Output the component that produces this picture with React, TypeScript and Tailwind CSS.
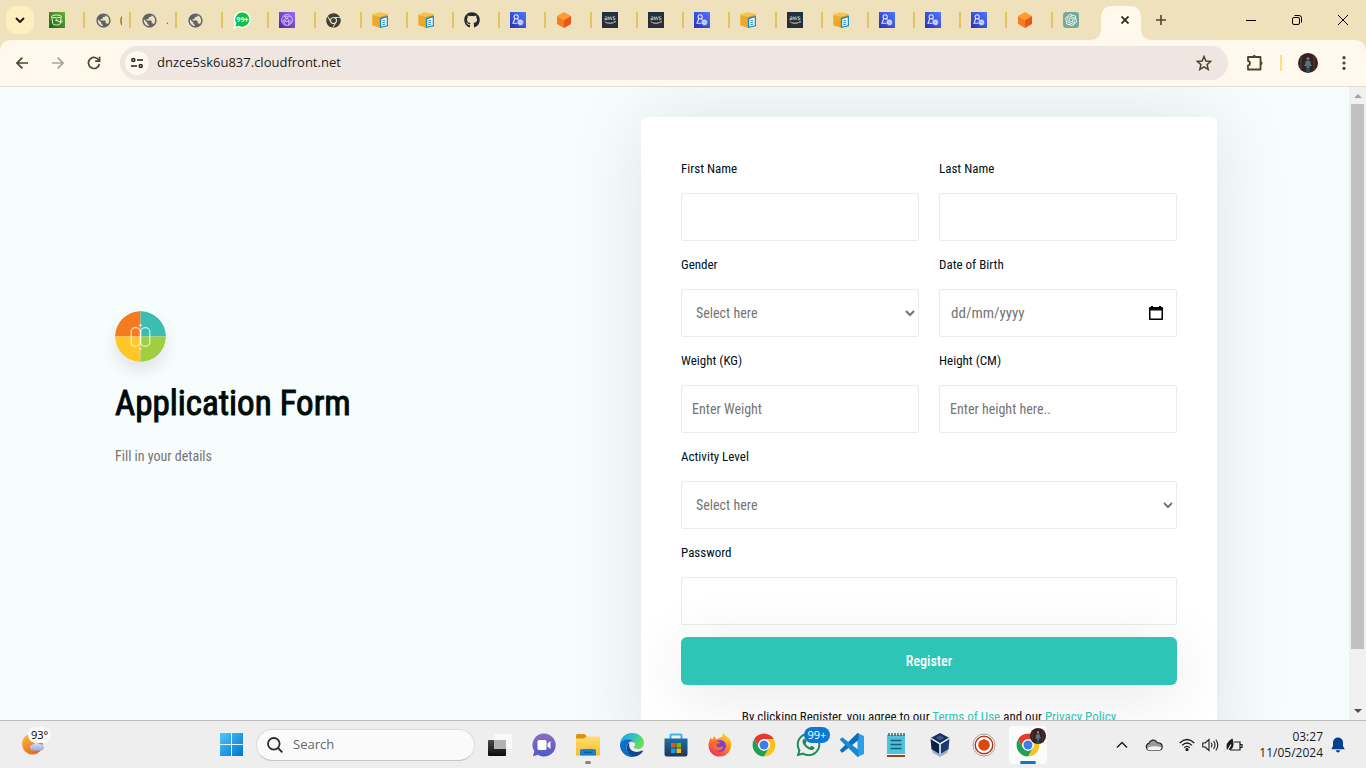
import React from "react";
import { FaAws, FaChrome, FaGithub, FaWhatsapp } from "react-icons/fa";
import { MdPublic } from "react-icons/md";
import { RiOpenaiFill } from "react-icons/ri";

type SvgProps = { className?: string };

/* ---------- favicons ---------- */

const BucketIcon = () => (
  <svg viewBox="0 0 16 16" className="size-4" fill="none" stroke="#e6f4d8" strokeWidth="1">
    <defs>
      <linearGradient id="s3g" x1="0" y1="1" x2="1" y2="0">
        <stop offset="0" stopColor="#1b660f" />
        <stop offset="1" stopColor="#6cae3e" />
      </linearGradient>
    </defs>
    <rect width="16" height="16" fill="url(#s3g)" stroke="none" />
    <ellipse cx="7.5" cy="4.4" rx="4.8" ry="1.4" />
    <path d="M2.7 4.6l1.2 7.2c.3 1.6 6.900 1.600 7.200 0l1.200-7.200M7.300 8.200l4 1.800c2.500 1 2.300-.6.500-1.900" />
    <circle cx="7.300" cy="8.200" r=".6" fill="#e6f4d8" />
  </svg>
);

const CdnIcon = () => (
  <svg viewBox="0 0 16 16" className="size-4" fill="none" stroke="#e9dcff" strokeWidth=".8">
    <defs>
      <linearGradient id="cfg" x1="0" y1="1" x2="1" y2="0">
        <stop offset="0" stopColor="#4d27a8" />
        <stop offset="1" stopColor="#a166ff" />
      </linearGradient>
    </defs>
    <rect width="16" height="16" fill="url(#cfg)" stroke="none" />
    <circle cx="8" cy="8" r="5.400" />
    <circle cx="7.500" cy="5.500" r="1.200" />
    <circle cx="5.200" cy="9" r="1.200" />
    <circle cx="10.500" cy="9.800" r="1.200" />
    <path d="M6.800 6.500L5.700 8M8.300 6.400l1.700 2.500M6.400 9.200l2.900.5M4.500 4l2 1M11.500 4.500L8.700 5.200M5.400 10.200l1 2.700M10.300 11l-1 2" />
  </svg>
);

const BoxIcon = () => (
  <svg viewBox="0 0 16 16" className="size-4">
    <path d="M0 2.600L7 .2l8.500 1.600v2L8 5.600 0 3.600z" fill="#f8c24e" />
    <path d="M.3 3.300L8 5v10.800L.3 13.200z" fill="#f0a828" />
    <path d="M8 5l7.500-2v10L8 15.800z" fill="#e08c1a" />
    <path d="M7.800 6.200l8.200-2.400v10.400l-8.200 1.800z" fill="#1f8bc4" />
    <path d="M9.300 7.200l5.400-1.600v7.600l-5.400 1.300z" fill="#fff" />
    <path d="M10.300 9l3-.8M10.300 10.900l3-.8M10.300 12.800l3-.8" stroke="#1f8bc4" strokeWidth="1" />
  </svg>
);

const IdentityIcon = () => (
  <svg viewBox="0 0 16 16" className="size-4" fill="none" stroke="#dfe6ff" strokeWidth="1.100">
    <defs>
      <linearGradient id="idg" x1="0" y1="1" x2="1" y2="0">
        <stop offset="0" stopColor="#2a2fb8" />
        <stop offset="1" stopColor="#4f78ff" />
      </linearGradient>
    </defs>
    <rect width="16" height="16" fill="url(#idg)" stroke="none" />
    <circle cx="6.200" cy="4.800" r="2.100" />
    <path d="M4.800 6.500L3 11.200h4.500M7.500 6.500l.8 1.700" />
    <circle cx="10.400" cy="10.400" r="1.900" fill="#aebcf8" />
    <circle cx="10.400" cy="10.400" r="2.600" strokeDasharray="1 1" />
  </svg>
);

const HexIcon = () => (
  <svg viewBox="0 0 16 16" className="size-4">
    <path d="M8 0l7 4-7 4-7-4z" fill="#ff9a2e" />
    <path d="M1 4l7 4v8l-7-4z" fill="#f57c20" />
    <path d="M15 4L8 8v8l7-4z" fill="#e8571c" />
  </svg>
);

const AwsIcon = () => (
  <span className="flex size-4 items-center justify-center bg-[#222f3e]">
    <svg viewBox="0 0 16 16" className="size-4">
      <FaAws x="2" y="2" size={12} color="#e8eaed" />
      <path d="M3 10q5 3.200 10 0" fill="none" stroke="#d9861c" strokeWidth="1" />
    </svg>
  </span>
);

const ChatBadgeIcon = () => (
  <svg viewBox="0 0 18 18" className="size-[18px] shrink-0">
    <path d="M9.500 .8a7.800 7.800 0 1 1-3.800 14.700L1 17l1.500-4.500A7.800 7.800 0 0 1 9.500.8z" fill="#0fc24a" stroke="#fff" strokeWidth="1.500" />
    <text x="9.300" y="11.300" textAnchor="middle" fill="#fff" fontSize="7" fontWeight="700" fontFamily="Roboto, sans-serif">99+</text>
  </svg>
);

const GlobeIcon = () => <MdPublic className="size-[17px] shrink-0 text-[#5f6368]" />;
const GithubIcon = () => <FaGithub className="size-4 text-[#24292f]" />;
const ChromeMonoIcon = () => <FaChrome className="size-[15px] text-[#3f4034]" />;
const OpenAiIcon = () => (
  <span className="flex size-4 items-center justify-center rounded-[3px] bg-[#74aa9c]">
    <RiOpenaiFill className="size-[14px] text-white" />
  </span>
);

const tabs: { name: string; Icon: () => React.JSX.Element; text?: string }[] = [
  { name: "S3", Icon: BucketIcon },
  { name: "Site", Icon: GlobeIcon, text: "(" },
  { name: "Site", Icon: GlobeIcon, text: "." },
  { name: "Site", Icon: GlobeIcon },
  { name: "WhatsApp", Icon: ChatBadgeIcon },
  { name: "CloudFront", Icon: CdnIcon },
  { name: "Chrome", Icon: ChromeMonoIcon },
  { name: "Docs", Icon: BoxIcon },
  { name: "Docs", Icon: BoxIcon },
  { name: "GitHub", Icon: GithubIcon },
  { name: "IAM", Icon: IdentityIcon },
  { name: "Console", Icon: HexIcon },
  { name: "AWS", Icon: AwsIcon },
  { name: "AWS", Icon: AwsIcon },
  { name: "IAM", Icon: IdentityIcon },
  { name: "Docs", Icon: BoxIcon },
  { name: "AWS", Icon: AwsIcon },
  { name: "Docs", Icon: BoxIcon },
  { name: "IAM", Icon: IdentityIcon },
  { name: "IAM", Icon: IdentityIcon },
  { name: "IAM", Icon: IdentityIcon },
  { name: "Console", Icon: HexIcon },
  { name: "ChatGPT", Icon: OpenAiIcon },
];

/* ---------- browser chrome ---------- */

function TabStrip() {
  return (
    <div className="flex h-10 items-center bg-[#eee1bc] pl-[6px]">
      <button aria-label="Search tabs" className="mr-[5px] flex size-7 shrink-0 items-center justify-center rounded-[10px] bg-[#ffefc0]">
        <svg viewBox="0 0 10 6" className="h-[6px] w-[10px]" fill="none" stroke="#1f1c10" strokeWidth="2">
          <path d="M1 1l4 4 4-4" />
        </svg>
      </button>
      <div className="flex h-full max-w-[1060px] min-w-0 flex-1 items-center">
        {tabs.map(({ name, Icon, text }, i) => (
          <button key={i} aria-label={name} className="flex h-4 min-w-0 flex-1 items-center overflow-visible pl-[10px]">
            <Icon />
            {text && <span className="ml-2 w-[2px] overflow-hidden text-[10px] text-[#4a4020]">{text}</span>}
            {i < tabs.length - 1 && <span className="ml-auto h-4 w-[2px] shrink-0 bg-[#e0c562]" />}
          </button>
        ))}
      </div>
      <div className="relative ml-[2px] flex h-[34px] w-10 shrink-0 items-center self-end rounded-t-[10px] bg-[#fff8ec]">
        <svg viewBox="0 0 10 10" className="absolute bottom-0 -left-[10px] size-[10px]" fill="#fff8ec">
          <path d="M10 0v10H0A10 10 0 0 0 10 0z" />
        </svg>
        <svg viewBox="0 0 10 10" className="absolute -right-[10px] bottom-0 size-[10px]" fill="#fff8ec">
          <path d="M0 0v10h10A10 10 0 0 1 0 0z" />
        </svg>
        <button aria-label="Close tab" className="mb-[6px] ml-4 flex size-4 items-center justify-center">
          <svg viewBox="0 0 8 8" className="size-2" stroke="#2e2b1a" strokeWidth="1.800">
            <path d="M.5.5l7 7M7.500.5l-7 7" />
          </svg>
        </button>
      </div>
      <button aria-label="New tab" className="ml-[6px] flex size-7 shrink-0 items-center justify-center">
        <svg viewBox="0 0 10 10" className="size-[10px]" stroke="#4c472f" strokeWidth="1.600">
          <path d="M5 0v10M0 5h10" />
        </svg>
      </button>
      <div className="ml-auto flex h-full shrink-0">
        <button aria-label="Minimize" className="flex w-[46px] items-center justify-center">
          <svg viewBox="0 0 10 10" className="size-[10px]" stroke="#000"><path d="M0 5.500h10" /></svg>
        </button>
        <button aria-label="Restore" className="flex w-[46px] items-center justify-center">
          <svg viewBox="0 0 10 10" className="size-[10px]" fill="none" stroke="#000">
            <rect x=".5" y="2.500" width="7" height="7" rx="1.500" />
            <path d="M2.500.5h4.500a2.500 2.500 0 0 1 2.500 2.500v4.500" />
          </svg>
        </button>
        <button aria-label="Close" className="flex w-[46px] items-center justify-center">
          <svg viewBox="0 0 10 10" className="size-[10px]" stroke="#000"><path d="M0 0l10 10M10 0L0 10" /></svg>
        </button>
      </div>
    </div>
  );
}

const Avatar = ({ className }: SvgProps) => (
  <svg viewBox="0 0 20 20" className={className}>
    <clipPath id="avc"><circle cx="10" cy="10" r="10" /></clipPath>
    <g clipPath="url(#avc)">
      <rect width="20" height="20" fill="#33221f" />
      <path d="M3 0v20M16 0v20" stroke="#46302a" strokeWidth="2" />
      <circle cx="10" cy="5.500" r="1.600" fill="#a06c55" />
      <path d="M7.500 8.500q2.500-2 5 0l.5 4h-1.400V15H8.400v-2.500H7z" fill="#527384" />
      <path d="M8.400 15h3.200v5H8.400z" fill="#26506b" />
      <path d="M6.500 12.500h1.300M12.200 12.500h1.300" stroke="#b98468" />
    </g>
  </svg>
);

function Toolbar() {
  return (
    <div className="bg-[#eee1bc]">
      <div className="flex h-[47px] items-center rounded-t-[10px] border-b border-[#e8dfca] bg-[#fff8ec] pr-2 pl-2">
        <button aria-label="Back" className="flex size-7 items-center justify-center">
          <svg viewBox="0 0 12 12" className="size-3" fill="none" stroke="#4a452c" strokeWidth="1.700"><path d="M12 6H1M6.300.7L1 6l5.300 5.300" /></svg>
        </button>
        <button aria-label="Forward" className="ml-2 flex size-7 items-center justify-center">
          <svg viewBox="0 0 12 12" className="size-3" fill="none" stroke="#aba694" strokeWidth="1.700"><path d="M0 6h11M5.700.7L11 6l-5.300 5.300" /></svg>
        </button>
        <button aria-label="Reload" className="ml-2 flex size-7 items-center justify-center">
          <svg viewBox="0 0 14 14" className="size-[14px]" fill="none" stroke="#4a452c" strokeWidth="1.700">
            <path d="M11.800 4.300A5.500 5.500 0 1 0 12.400 8" />
            <path d="M12.600.8v4.400H8.200" />
          </svg>
        </button>
        <div className="ml-3 flex h-[34px] min-w-0 flex-1 items-center rounded-full bg-[#efe6e1] pr-3 pl-[5px]">
          <button aria-label="Site information" className="flex size-6 shrink-0 items-center justify-center rounded-full bg-[#fff8ec]">
            <svg viewBox="0 0 12 12" className="size-3" fill="none" stroke="#2a2a2a" strokeWidth="1.600">
              <circle cx="2.300" cy="3" r="1.500" /><path d="M6 3h6" />
              <circle cx="9.700" cy="9" r="1.500" /><path d="M0 9h6" />
            </svg>
          </button>
          <input
            aria-label="Address"
            defaultValue="dnzce5sk6u837.cloudfront.net"
            className="ml-2 min-w-0 flex-1 bg-transparent font-['Open_Sans',sans-serif] text-[13px] text-[#1f1c14] outline-none"
          />
          <button aria-label="Bookmark this page" className="flex size-6 items-center justify-center">
            <svg viewBox="0 0 16 16" className="size-4" fill="none" stroke="#4a452c" strokeWidth="1.500">
              <path d="M8 1.500l1.900 4.500 4.900.4-3.700 3.200 1.100 4.800L8 11.900l-4.200 2.500 1.100-4.800L1.200 6.400 6.100 6z" />
            </svg>
          </button>
        </div>
        <button aria-label="Extensions" className="ml-3 flex size-7 items-center justify-center">
          <svg viewBox="0 0 18 18" className="size-[18px]" fill="none" stroke="#4a452c" strokeWidth="1.800" strokeLinejoin="round">
            <path d="M3 3h12.500v12.500H3v-4c2.600-.3 2.600-4.200 0-4.500z" />
            <path d="M7.500 2.500a2 2 0 0 1 3.500 0zM16 7.500a2 2 0 0 1 0 3.500z" fill="#4a452c" strokeWidth="1" />
          </svg>
        </button>
        <span className="ml-3 h-4 w-[2px] bg-[#ffe07a]" />
        <button aria-label="Profile" className="ml-4 flex size-5 items-center justify-center">
          <Avatar className="size-5" />
        </button>
        <button aria-label="Menu" className="ml-3 flex size-7 items-center justify-center">
          <svg viewBox="0 0 4 14" className="h-[14px] w-1" fill="#4a452c">
            <circle cx="2" cy="1.700" r="1.600" /><circle cx="2" cy="7" r="1.600" /><circle cx="2" cy="12.300" r="1.600" />
          </svg>
        </button>
      </div>
    </div>
  );
}

/* ---------- page ---------- */

const fieldClass =
  "h-12 w-full rounded-[2px] border border-[#ebebeb] bg-transparent px-[10px] text-sm text-[#757575] placeholder:text-[#757575] outline-none";

function Field({ id, label, children, wide }: { id: string; label: string; children: React.ReactNode; wide?: boolean }) {
  return (
    <div className={wide ? "col-span-2" : ""}>
      <label htmlFor={id} className="mb-3 block text-[13px] leading-6 text-[#00101c]">{label}</label>
      {children}
    </div>
  );
}

const Logo = () => (
  <svg viewBox="0 0 52 52" className="size-[51px] rounded-full shadow-[0_8px_16px_rgba(0,0,0,0.1)]" role="img" aria-label="Logo">
    <clipPath id="lgc"><circle cx="26" cy="26" r="26" /></clipPath>
    <g clipPath="url(#lgc)">
      <path d="M0 0h26v26H0z" fill="#f47b20" />
      <path d="M26 0h26v26H26z" fill="#3dbdb1" />
      <path d="M0 26h26v26H0z" fill="#ffc629" />
      <path d="M26 26h26v26H26z" fill="#9fce41" />
    </g>
    <g fill="none" stroke="#fff" strokeOpacity=".7" strokeWidth="1.400">
      <rect x="16.500" y="17" width="9.300" height="19" rx="4.500" />
      <rect x="26.200" y="17" width="9.300" height="19" rx="4.500" />
    </g>
    <circle cx="26" cy="14.500" r="1.200" fill="#fff" fillOpacity=".75" />
    <circle cx="26" cy="38.500" r="1.200" fill="#fff" fillOpacity=".6" />
  </svg>
);

function Page() {
  return (
    <main className="flex min-h-0 flex-1 overflow-hidden bg-[#f7fdfd] font-['Roboto_Condensed','Liberation_Sans_Narrow','Liberation_Sans',sans-serif]">
      <div className="grid min-w-0 flex-1 grid-cols-[526fr_576fr] items-start overflow-hidden pt-[30px] pr-[132px] pl-[115px]">
        <section className="pt-[194px]">
          <Logo />
          <h1 className="mt-4 text-[35px] leading-[52px] text-[#000b0a] [-webkit-text-stroke:1px]">Application Form</h1>
          <p className="mt-[14px] text-sm leading-6 text-[#757575]">Fill in your details</p>
        </section>
        <form
          className="grid grid-cols-2 gap-x-5 gap-y-3 rounded-md bg-white p-10 shadow-[0_0_80px_rgba(0,0,0,0.1)]"
          onSubmit={(e) => e.preventDefault()}
        >
          <Field id="first" label="First Name"><input id="first" className={fieldClass} /></Field>
          <Field id="last" label="Last Name"><input id="last" className={fieldClass} /></Field>
          <Field id="gender" label="Gender">
            <select id="gender" className={fieldClass}>
              <option>Select here</option><option>Male</option><option>Female</option>
            </select>
          </Field>
          <Field id="dob" label="Date of Birth">
            <div className="flex h-12 items-center rounded-[2px] border border-[#ebebeb] pr-[10px] pl-[11px]">
              <input id="dob" placeholder="dd/mm/yyyy" className="min-w-0 flex-1 bg-transparent text-[15px] text-[#757575] outline-none placeholder:text-[#757575]" />
              <button type="button" aria-label="Open calendar" className="flex size-5 items-center justify-center">
                <svg viewBox="0 0 14 14" className="size-[14px]" fill="#000">
                  <path d="M2 0h2v1h6V0h2v1h1q1 0 1 1v11q0 1-1 1H1q-1 0-1-1V2q0-1 1-1h1zM1.500 4.500v8h11v-8z" fillRule="evenodd" />
                </svg>
              </button>
            </div>
          </Field>
          <Field id="weight" label="Weight (KG)"><input id="weight" placeholder="Enter Weight" className={fieldClass} /></Field>
          <Field id="height" label="Height (CM)"><input id="height" placeholder="Enter height here.." className={fieldClass} /></Field>
          <Field id="activity" label="Activity Level" wide>
            <select id="activity" className={fieldClass}>
              <option>Select here</option><option>Low</option><option>High</option>
            </select>
          </Field>
          <Field id="password" label="Password" wide><input id="password" type="password" className={fieldClass} /></Field>
          <button type="submit" className="col-span-2 h-12 rounded-md bg-[#2ec4b6] pb-px text-sm font-medium text-white shadow-[0_10px_60px_rgba(0,0,0,0.1)]">
            Register
          </button>
          <p className="col-span-2 mt-2 text-center text-[13px] leading-6 text-[#111]">
            By clicking Register, you agree to our <a href="#terms" className="text-[#2ec4b6]">Terms of Use</a> and our{" "}
            <a href="#privacy" className="text-[#2ec4b6]">Privacy Policy</a>
          </p>
        </form>
      </div>
      <div aria-hidden="true" className="flex w-[17px] shrink-0 flex-col items-center bg-[#f1f1f1] py-[6px]">
        <svg viewBox="0 0 8 5" className="h-[5px] w-2" fill="#a3a3a3"><path d="M0 5l4-4 4 4z" /></svg>
        <div className="mt-[6px] flex min-h-0 w-[13px] flex-1 flex-col">
          <div className="h-[90%] bg-[#c1c1c1]" />
        </div>
        <svg viewBox="0 0 8 5" className="h-[5px] w-2" fill="#505050"><path d="M0 0l4 4 4-4z" /></svg>
      </div>
    </main>
  );
}

/* ---------- taskbar ---------- */

const ChromeLogo = ({ className = "size-6" }: SvgProps) => {
  const arm = "M24 13H43.050A22 22 0 0 0 4.950 13L14.470 29.500A11 11 0 0 1 24 13z";
  return (
    <svg viewBox="1 1 46 46" className={className}>
      <circle cx="24" cy="24" r="22" fill="#fff" />
      <path d={arm} fill="#e33b2e" />
      <path d={arm} fill="#fcc31e" transform="rotate(120 24 24)" />
      <path d={arm} fill="#1fa050" transform="rotate(240 24 24)" />
      <circle cx="24" cy="24" r="11" fill="#fff" />
      <circle cx="24" cy="24" r="8.600" fill="#3b7ded" />
    </svg>
  );
};

const TaskViewIcon = () => (
  <svg viewBox="0 0 24 24" className="size-6">
    <defs><linearGradient id="tvd" x1="0" y1="0" x2="0" y2="1"><stop stopColor="#4a4a4a" /><stop offset="1" stopColor="#0c0c0c" /></linearGradient></defs>
    <rect x="6" y="1" width="18" height="15" rx="1" fill="#fafafa" />
    <rect x="0" y="7" width="18" height="16" rx="1" fill="url(#tvd)" />
    <path d="M6 7h12v9H6z" fill="#b2b2b2" />
  </svg>
);

const MeetIcon = () => (
  <svg viewBox="0 0 24 24" className="size-6">
    <defs><linearGradient id="mtg" x1="0" y1="0" x2="0" y2="1"><stop stopColor="#8c6fc0" /><stop offset="1" stopColor="#5059c9" /></linearGradient></defs>
    <path d="M12 .5A11.500 11.500 0 1 1 6 21.700L1 23.200l1.300-5A11.500 11.500 0 0 1 12 .5z" fill="url(#mtg)" />
    <rect x="5.500" y="7" width="9" height="10" rx="1.500" fill="#fff" />
    <path d="M15.500 10.500l3-2.500v8l-3-2.500z" fill="#fff" />
  </svg>
);

const FolderIcon = () => (
  <svg viewBox="0 0 24 24" className="size-6">
    <defs><linearGradient id="fdg" x1="0" y1="0" x2="0" y2="1"><stop stopColor="#ffdf70" /><stop offset="1" stopColor="#fbbc2c" /></linearGradient></defs>
    <path d="M0 2.500Q0 1 1.500 1h7L11 3.500 9 6H0z" fill="#d9940f" />
    <path d="M0 5.500h8l2.500-2H23q1 0 1 1v17q0 1-1 1H1q-1 0-1-1z" fill="url(#fdg)" />
    <path d="M4 22.500V18q0-2 2-2h12q2 0 2 2v4.500z" fill="#1380d3" />
    <path d="M8 19.500h8" stroke="#0a5a9c" strokeWidth="1.500" />
  </svg>
);

const EdgeIcon = () => (
  <svg viewBox="0 0 24 24" className="size-6">
    <defs>
      <linearGradient id="edg" x1="0" y1="0" x2="1" y2=".4"><stop stopColor="#1f9fe0" /><stop offset=".5" stopColor="#2cbfcf" /><stop offset="1" stopColor="#69df55" /></linearGradient>
    </defs>
    <path d="M0 12C0 5 5 0 12 0c7.500 0 12 5 12 10 0 3.800-3 6-6 6-2.800 0-4.300-1.100-4-2 .3-1 1.200-1.400 1.200-3 0-2-2.200-4-5.200-4C5 7 0 10 0 12z" fill="url(#edg)" />
    <path d="M0 12c.5-3.500 4-5.500 8.200-5.500 3.500 0 6.300 1.500 6.900 4-1-1.500-2.500-2-3.800-2C8 9 6.300 12 6.500 15c.3 4.500 4 8 8.500 8.500A12 12 0 0 1 0 12z" fill="#0c6fc7" />
    <path d="M9 9.500c-2.500 2-3 5-2 8 1.300 4 5 6.500 8.500 6 3.300-.7 6-2.800 7.400-5.200.3-.6-.2-1-.8-.7-5 2.500-11 1.500-12.500-3-.6-2-.3-3.800-.6-5.100z" fill="#114a8b" />
  </svg>
);

const StoreIcon = () => (
  <svg viewBox="0 0 24 24" className="size-6">
    <defs><linearGradient id="stg" x1="0" y1="0" x2="0" y2="1"><stop stopColor="#1b6fa8" /><stop offset="1" stopColor="#22345a" /></linearGradient></defs>
    <path d="M6.500 6V2.500q0-1 1-1h9q1 0 1 1V6" fill="none" stroke="#34b5ee" strokeWidth="2" />
    <path d="M.5 5.500h23V21q0 2.500-2.500 2.500H3Q.5 23.500.5 21z" fill="url(#stg)" />
    <path d="M7 10h4.500v4.500H7z" fill="#f25022" /><path d="M12.500 10H17v4.500h-4.500z" fill="#7fba00" />
    <path d="M7 15.500h4.500V20H7z" fill="#00a4ef" /><path d="M12.500 15.500H17V20h-4.500z" fill="#ffb900" />
  </svg>
);

const FirefoxIcon = () => (
  <svg viewBox="0 0 24 24" className="size-6">
    <defs>
      <linearGradient id="ffg" x1=".85" y1="0" x2=".2" y2="1"><stop stopColor="#ffe23e" /><stop offset=".45" stopColor="#ff8a1e" /><stop offset="1" stopColor="#f0286b" /></linearGradient>
    </defs>
    <path d="M2.500 4.500l1.700 2.200L6.500 3l1.500 3.200L14 4c0-2 1-3.300 2-4 .5 3 5.200 4 6.500 7.500C25 15.500 20 23.500 12 23.500S-.5 17 .8 10z" fill="url(#ffg)" />
    <circle cx="12" cy="13" r="6" fill="#7b3fd1" />
    <path d="M4.500 8.500c3-1.500 4 0 7 .3 1.500.3 1 1.600-1.500 2-2 .5-2 2.500.5 3.200 2 .5 3.500-1 5-.2-1 3.200-4.500 4.700-7.500 3.500-3.500-1.500-4.800-5-3.500-8.800z" fill="#ff6a2a" />
  </svg>
);

const WhatsAppIcon = () => (
  <span className="relative">
    <FaWhatsapp className="size-[27px] text-[#1c8a55]" />
    <span className="absolute -top-[4px] left-[9px] rounded-full bg-[#0a78d4] px-1 font-['Open_Sans',sans-serif] text-[11px] leading-4 text-white">99+</span>
  </span>
);

const CodeIcon = () => (
  <svg viewBox="0 0 24 24" className="size-6">
    <path d="M17.500 0L24 3v18l-6.500 3z" fill="#2c9fe6" />
    <path d="M17.500 0l1 .5V7L3 19.300q-.8.500-1.500 0L.3 18q-.6-.8.200-1.500z" fill="#0f6db5" />
    <path d="M17.500 24l1-.5V17L3 4.700q-.8-.5-1.500 0L.3 6q-.6.8.2 1.500z" fill="#1b88d2" />
  </svg>
);

const NotepadIcon = () => (
  <svg viewBox="0 0 24 24" className="size-6">
    <path d="M3 2h18v20H3z" fill="#50c1dc" />
    <path d="M3 21h18v3H3z" fill="#8a4b1b" /><path d="M3 21h18v1H3z" fill="#f4f4f4" />
    <path d="M5 0v3M8 0v3M11 0v3M14 0v3M17 0v3M20 0v3" stroke="#19506b" strokeWidth="1.300" />
    <path d="M6.500 7.500h11M6.500 11.500h11M6.500 15.500h11" stroke="#155d78" strokeWidth="1.600" />
  </svg>
);

const CubeIcon = () => (
  <svg viewBox="0 0 24 24" className="size-6">
    <path d="M3 15l2 5 7 4 7-4 2-5z" fill="#a3adc6" />
    <path d="M12 0l9.500 5L12 10.500 2.500 5z" fill="#16305c" />
    <path d="M2.500 5.500l9 5.500v10l-8-5z" fill="#0d2145" /><path d="M21.500 5.500l-9 5.500v10l8-5z" fill="#1c3a6d" />
    <path d="M2.500 5.200l9.500 5.600 9.500-5.600M12 11v10" fill="none" stroke="#e3e9f5" strokeWidth="1.500" />
    <path d="M12 2.300l4.500 2.500L12 7.300 7.500 4.800z" fill="#3d5587" />
  </svg>
);

const RecordIcon = () => (
  <svg viewBox="0 0 24 24" className="size-6">
    <circle cx="12" cy="12" r="11" fill="#fff" stroke="#8f8a88" strokeWidth=".8" />
    <circle cx="12" cy="12" r="8.800" fill="none" stroke="#b5371a" strokeWidth="1.500" />
    <circle cx="12" cy="12" r="5.800" fill="#dd460f" />
  </svg>
);

const apps: { name: string; Icon: (p: SvgProps) => React.JSX.Element; running?: boolean }[] = [
  { name: "Task view", Icon: TaskViewIcon },
  { name: "Chat", Icon: MeetIcon },
  { name: "File Explorer", Icon: FolderIcon, running: true },
  { name: "Edge", Icon: EdgeIcon },
  { name: "Microsoft Store", Icon: StoreIcon },
  { name: "Firefox", Icon: FirefoxIcon },
  { name: "Chrome", Icon: ChromeLogo },
  { name: "WhatsApp", Icon: WhatsAppIcon },
  { name: "Visual Studio Code", Icon: CodeIcon },
  { name: "Notepad", Icon: NotepadIcon },
  { name: "VirtualBox", Icon: CubeIcon },
  { name: "Recorder", Icon: RecordIcon },
];

function Taskbar() {
  return (
    <footer className="flex h-12 shrink-0 items-center border-t border-[#bdbdbd] bg-[#eeeeee] font-['Open_Sans',sans-serif]">
      <div className="w-[209px] shrink-0 pl-[22px]">
        <button aria-label="Weather" className="relative block h-8 w-8">
          <svg viewBox="0 0 32 32" className="size-8">
            <defs>
              <linearGradient id="wtg" x1="0" y1="0" x2=".6" y2="1"><stop stopColor="#f7c33b" /><stop offset="1" stopColor="#f0641a" /></linearGradient>
              <linearGradient id="wcl" x1="0" y1="0" x2="0" y2="1"><stop stopColor="#d3e2fb" /><stop offset="1" stopColor="#8fb0ea" /></linearGradient>
            </defs>
            <circle cx="10.500" cy="15" r="10.500" fill="url(#wtg)" />
            <path d="M11 21.500a3 3 0 0 1 0-6q2.500-3.500 6-.5 5 0 5 3.500 0 3-3 3z" fill="url(#wcl)" />
          </svg>
          <span className="absolute -top-[2px] left-[6px] rounded-full bg-[#fafafa] px-[3px] text-[11px] leading-4 text-black">93°</span>
        </button>
      </div>
      <button aria-label="Start" className="flex w-11 shrink-0 items-center justify-center">
        <svg viewBox="0 0 23 23" className="size-[23px]">
          <defs><linearGradient id="wng" x1="0" y1="0" x2="1" y2="1" gradientUnits="objectBoundingBox"><stop stopColor="#4cc9fa" /><stop offset="1" stopColor="#0073d0" /></linearGradient></defs>
          <path d="M0 0h11v11H0zM12 0h11v11H12zM0 12h11v11H0zM12 12h11v11H12z" fill="url(#wng)" />
        </svg>
      </button>
      <label className="ml-[3px] flex h-8 w-[219px] shrink-0 items-center rounded-full border border-[#dcdcdc] border-b-[#c4c4c4] bg-[#fafafa] pl-[10px]">
        <svg viewBox="0 0 16 16" className="size-4 shrink-0" fill="none" stroke="#2a2a2a" strokeWidth="1.800">
          <circle cx="6.800" cy="6.800" r="5.800" /><path d="M11 11l4.300 4.300" />
        </svg>
        <input aria-label="Search" placeholder="Search" className="ml-[10px] min-w-0 flex-1 bg-transparent text-[13px] outline-none placeholder:text-[#666]" />
      </label>
      <div className="ml-[3px] flex h-full items-center">
        {apps.map(({ name, Icon, running }) => (
          <button key={name} aria-label={name} className="relative flex h-full w-11 items-center justify-center">
            <Icon />
            {running && <span className="absolute bottom-1 h-[3px] w-[6px] rounded-full bg-[#858585]" />}
          </button>
        ))}
        <button aria-label="Chrome window" className="relative mx-[3px] flex h-[38px] w-[38px] items-center justify-center rounded bg-[#fbfbfb]">
          <ChromeLogo />
          <Avatar className="absolute top-[2px] right-[1px] size-4" />
          <span className="absolute bottom-0 h-[3px] w-4 rounded-full bg-[#0a78d4]" />
        </button>
      </div>
      <div className="ml-auto flex items-center pr-[21px] text-[#1a1a1a]">
        <button aria-label="Show hidden icons" className="mr-[17px]">
          <svg viewBox="0 0 12 8" className="h-2 w-3" fill="none" stroke="currentColor" strokeWidth="1.400"><path d="M1 6.500l5-5 5 5" /></svg>
        </button>
        <svg viewBox="0 0 18 12" className="mr-4 h-3 w-[18px]" stroke="#222" fill="#9a9a9a" strokeWidth="1.200">
          <path d="M4.500 11.200a3.600 3.600 0 0 1-.6-7C5 1.200 9.800-.8 12.300 3.700c3.200.2 4.900 1.800 4.900 4 0 2.100-1.500 3.500-3.700 3.500z" />
          <path d="M2 9.500c3-2 6-3 14.500-1.200-.3 1.800-1.300 2.900-3 2.900h-9q-1.600-.2-2.500-1.700z" fill="#f3f3f3" stroke="none" />
        </svg>
        <button aria-label="Network, sound and battery" className="flex items-center gap-[7px]">
          <svg viewBox="0 0 16 13" className="h-[13px] w-4" fill="none" stroke="currentColor" strokeWidth="1.200">
            <path d="M.7 5q7.300-7 14.600 0M3 7.400q5-4.800 10 0M5.300 9.700q2.700-2.600 5.400 0" /><circle cx="8" cy="11.500" r="1" fill="currentColor" />
          </svg>
          <svg viewBox="0 0 17 14" className="h-[14px] w-[17px]" fill="none" stroke="currentColor" strokeWidth="1.100">
            <path d="M.8 5v4h2.400L7 12.500v-11L3.200 5zM9.200 4.800q1.500 2.200 0 4.400M11.500 3q3 4 0 8M13.800 1.500q4 5.500 0 11" />
          </svg>
          <svg viewBox="0 0 17 14" className="h-[14px] w-[17px]" fill="none" stroke="currentColor" strokeWidth="1.200">
            <path d="M8 4h6v8H4M14.200 6.500h1.800v3h-1.800" />
            <path d="M1 12C-.5 6 2 3 6.500.5 8 5 8 9.500 5 11.500c-1.500.8-2.500.3-3 0z" fill="currentColor" stroke="none" />
            <path d="M1.500 12.500L5 6.500" stroke="#eee" />
          </svg>
        </button>
        <button className="ml-4 text-right text-xs leading-4">
          <span className="block">03:27</span>
          <span className="block">11/05/2024</span>
        </button>
        <button aria-label="Notifications" className="ml-2">
          <svg viewBox="0 0 14 16" className="h-4 w-[14px]" fill="#003e92">
            <path d="M7 .5a5 5 0 0 1 5 5V9l1.700 3.300H.3L2 9V5.500a5 5 0 0 1 5-5zM4.800 13.300h4.400Q8.600 15.500 7 15.500t-2.200-2.200z" />
          </svg>
        </button>
      </div>
    </footer>
  );
}

export default function App() {
  return (
    <div className="flex h-screen flex-col overflow-hidden">
      <header className="shrink-0">
        <TabStrip />
        <Toolbar />
      </header>
      <Page />
      <Taskbar />
    </div>
  );
}
